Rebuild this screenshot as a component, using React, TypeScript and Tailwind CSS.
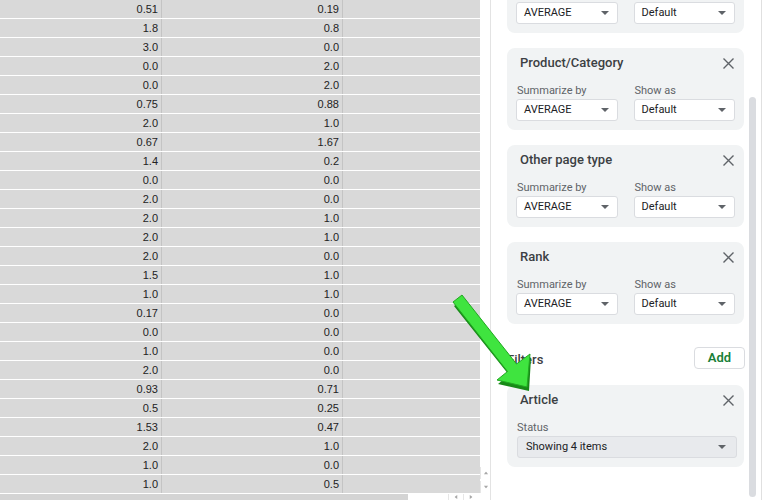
import React from "react";

const firstCol = [
  "0.51", "1.8", "3.0", "0.0", "0.0", "0.75", "2.0", "0.67", "1.4", "0.0", "2.0", "2.0", "2.0",
  "2.0", "1.5", "1.0", "0.17", "0.0", "1.0", "2.0", "0.93", "0.5", "1.53", "2.0", "1.0", "1.0",
];

const secondCol = [
  "0.19", "0.8", "0.0", "2.0", "2.0", "0.88", "1.0", "1.67", "0.2", "0.0", "0.0", "1.0", "1.0",
  "0.0", "1.0", "1.0", "0.0", "0.0", "0.0", "0.0", "0.71", "0.25", "0.47", "1.0", "0.0", "0.5",
];

const Caret = () => (
  <svg width="8" height="4" viewBox="0 0 8 4">
    <path d="M0 0h8L4 4z" fill="#5f6368" />
  </svg>
);

const CloseIcon = () => (
  <svg width="11" height="11" viewBox="0 0 11 11">
    <path d="M0.5 0.5l10 10M10.5 0.5l-10 10" stroke="#5f6368" strokeWidth="1.4" />
  </svg>
);

const Select = ({ value }: { value: string }) => (
  <div className="flex h-[22px] items-center justify-between rounded-[3px] border border-[#dadce0] bg-white pl-[7px] pr-[8px] text-[11px] text-[#202124]">
    <span>{value}</span>
    <Caret />
  </div>
);

const CardHeader = ({ title }: { title: string }) => (
  <header className="flex h-[16px] items-center justify-between pl-[4px] pr-[1px]">
    <h3 className="text-[13px] font-medium leading-[16px] text-[#3c4043]">{title}</h3>
    <CloseIcon />
  </header>
);

const FieldLabel = ({ children }: { children: React.ReactNode }) => (
  <div className="h-[14px] pl-[1px] text-[11px] leading-[16px] text-[#5f6368]">{children}</div>
);

const SelectPair = () => (
  <div className="grid grid-cols-2 gap-x-[16px]">
    <Select value="AVERAGE" />
    <Select value="Default" />
  </div>
);

const ValueCard = ({ title }: { title: string }) => (
  <section className="rounded-[8px] bg-[#f1f3f4] px-[9px] pb-[9px] pt-[7px]">
    <CardHeader title={title} />
    <div className="mt-[12px] grid grid-cols-2 gap-x-[16px]">
      <FieldLabel>Summarize by</FieldLabel>
      <FieldLabel>Show as</FieldLabel>
    </div>
    <div className="mt-[2px]">
      <SelectPair />
    </div>
  </section>
);

const SheetGrid = () => (
  <div className="w-[480px] bg-[#d9d9d9] text-[11px] text-[#222]" style={{ fontFamily: "'Liberation Sans', Arial, sans-serif" }}>
    {firstCol.map((v, i) => (
      <div key={i} className="flex h-[19px] border-b border-white">
        <div className="w-[162px] border-r border-[#c4c4c4] pr-[3px] text-right leading-[19px]">{v}</div>
        <div className="w-[181px] border-r border-[#c4c4c4] pr-[3px] text-right leading-[19px]">{secondCol[i]}</div>
        <div className="flex-1" />
      </div>
    ))}
  </div>
);

const TinyArrow = ({ dir }: { dir: "up" | "down" | "left" | "right" }) => {
  const d = {
    up: "M0 4L3 0L6 4z",
    down: "M0 0h6L3 4z",
    left: "M4 0v6L0 3z",
    right: "M0 0v6L4 3z",
  }[dir];
  const w = dir === "up" || dir === "down" ? 6 : 4;
  const h = dir === "up" || dir === "down" ? 4 : 6;
  return (
    <svg width={w} height={h} viewBox={`0 0 ${w} ${h}`} className="scale-75">
      <path d={d} fill="#a8a8a8" />
    </svg>
  );
};

const SheetArea = () => (
  <div className="flex w-[490px] flex-col">
    <div className="flex h-[494px] overflow-hidden">
      <SheetGrid />
      <div className="flex w-[10px] flex-col justify-end gap-[2px] pb-[1px]">
        <div className="flex h-[12px] items-center justify-center border-l border-[#e6e6e6]">
          <TinyArrow dir="up" />
        </div>
        <div className="flex h-[12px] items-center justify-center border-l border-[#e6e6e6]">
          <TinyArrow dir="down" />
        </div>
      </div>
    </div>
    <div className="flex h-[6px] items-center">
      <div className="h-full w-[408px] bg-[#d4d4d4]" />
      <div className="flex-1" />
      <div className="flex h-full w-[15px] items-center justify-center border-l border-[#e6e6e6]">
        <TinyArrow dir="left" />
      </div>
      <div className="flex h-full w-[15px] items-center justify-center border-l border-[#e6e6e6]">
        <TinyArrow dir="right" />
      </div>
      <div className="w-[12px]" />
    </div>
  </div>
);

const EditorPanel = () => (
  <aside className="flex h-[500px] flex-1 overflow-hidden border-l border-[#e3e3e3] bg-white" style={{ fontFamily: "Roboto, 'Noto Sans', sans-serif" }}>
    <div className="flex w-[253px] flex-col pl-[16px]">
      {/* lower half of the card scrolled past the top */}
      <section className="rounded-b-[8px] bg-[#f1f3f4] px-[9px] pb-[9px] pt-[2px]">
        <SelectPair />
      </section>
      <div className="mt-[15px] flex flex-col gap-[15px]">
        <ValueCard title="Product/Category" />
        <ValueCard title="Other page type" />
        <ValueCard title="Rank" />
      </div>
      <div className="mt-[23px] flex h-[22px] items-center justify-between">
        <h2 className="mt-[3px] text-[13px] font-medium text-[#3c4043]">Filters</h2>
        <button className="-mr-[1px] h-[22px] w-[51px] rounded-[4px] border border-[#dadce0] bg-white text-[13px] font-semibold text-[#188038]">
          Add
        </button>
      </div>
      <section className="mt-[16px] rounded-[8px] bg-[#f1f3f4] pb-[9px] pl-[10px] pr-[7px] pt-[7px]">
        <header className="flex h-[16px] items-center justify-between pl-[3px] pr-[3px]">
          <h3 className="text-[13px] font-medium leading-[16px] text-[#3c4043]">Article</h3>
          <CloseIcon />
        </header>
        <div className="mt-[12px] h-[14px] text-[11px] leading-[16px] text-[#5f6368]">Status</div>
        <div className="mt-[2px] flex h-[22px] items-center justify-between rounded-[3px] border border-[#dadce0] bg-[#e8eaed] pl-[8px] pr-[10px] text-[11px] text-[#202124]">
          <span>Showing 4 items</span>
          <Caret />
        </div>
      </section>
    </div>
    <div className="ml-[5px] w-[7px] pb-[3px] pt-[97px]">
      <div className="h-full rounded-full bg-[#dadce0]" />
    </div>
    <div className="w-[5px]" />
    <div className="w-[5px] border-l border-[#e0e0e0]" />
  </aside>
);

// callout arrow drawn on top of the sheet and the panel
const CalloutArrow = () => (
  <svg className="pointer-events-none absolute inset-0" width="766" height="500" viewBox="0 0 766 500">
    <polygon
      points="463,297 517,365 530,356 528,389 497,382 508,373 453,304"
      fill="#178a17"
      transform="translate(1 2)"
    />
    <polygon
      points="462,295 516.5,364 530,354 527,387 497,380 507.5,371.5 453,302"
      fill="#3fe43f"
      stroke="#22a822"
      strokeWidth="1"
      strokeLinejoin="round"
    />
  </svg>
);

export default function App() {
  return (
    <div className="relative flex h-[500px] w-[766px] overflow-hidden bg-white">
      <SheetArea />
      <EditorPanel />
      <CalloutArrow />
    </div>
  );
}
